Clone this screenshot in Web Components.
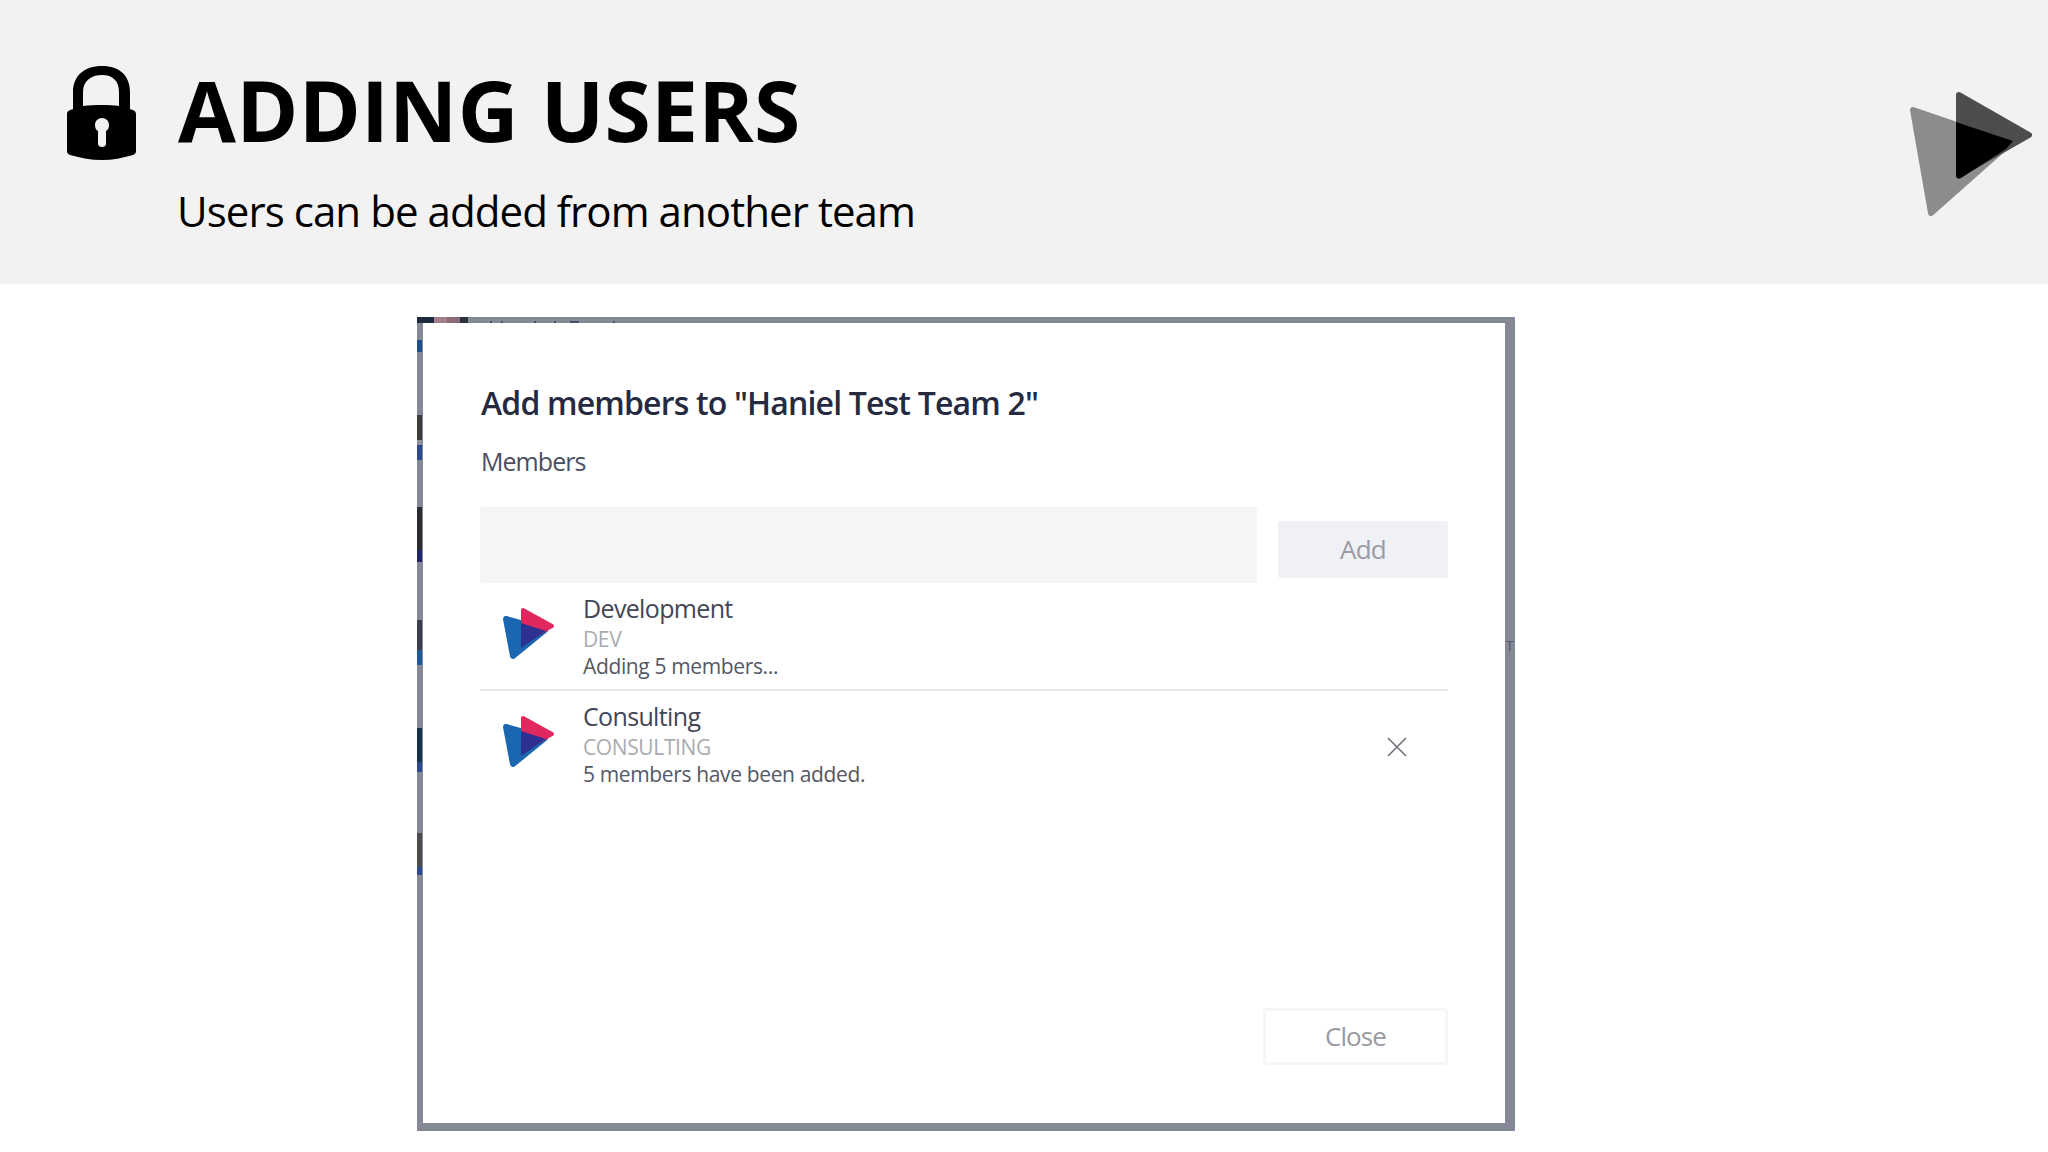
<!DOCTYPE html>
<html><head><meta charset="utf-8"><style>html,body{margin:0;background:#fff;font-family:"Open Sans","Noto Sans",sans-serif}</style></head><body>
<slide-header heading="ADDING USERS" sub="Users can be added from another team"></slide-header>
<slide-stage>
<add-dialog heading='Add members to "Haniel Test Team 2"' label="Members">
<team-row name="Development" code="DEV" status="Adding 5 members..."></team-row>
<team-row name="Consulting" code="CONSULTING" status="5 members have been added." removable></team-row>
</add-dialog>
</slide-stage>
<script>
function def(name,html,init){customElements.define(name,class extends HTMLElement{connectedCallback(){if(this.shadowRoot)return;const s=this.attachShadow({mode:'open'});s.innerHTML=html;init&&init(this,s)}})}
const attrs=(h,s)=>{s.querySelectorAll('[data-a]').forEach(e=>e.textContent=h.getAttribute(e.dataset.a)||'')};
def('slide-header',`<style>
:host{display:flex;box-sizing:border-box;height:284px;background:#f2f2f2;position:relative;padding:66px 0 0 67px;gap:41px;color:#000}
.lock{width:70px;height:94px;flex:none;display:block}
.t{display:flex;flex-direction:column;padding-top:2px}
h1{margin:0;font:700 84px/1 "Open Sans",sans-serif;letter-spacing:.25px;height:78px;white-space:nowrap}
p{margin:40px 0 0 -1px;font:400 42px/1.2 "Open Sans",sans-serif;letter-spacing:-.93px;white-space:nowrap}
.logo{position:absolute;left:1905px;top:88px;width:132px;height:132px}
</style>
<svg class="lock" viewBox="0 0 70 94"><path fill-rule="evenodd" fill="#000" d="M6 43V26C6 10 17 0 35 0S63 10 63 26V43C66 44 69 45 69 48V85C69 87 68 88 66 89C55 92 46 94 35 94S14 92 3 89C1 88 0 87 0 85V48C0 45 3 44 6 43ZM16 40C22 39 29 39 35 39S47 39 52 40V26C52 15 46 9 35 9S16 15 16 26ZM35 52C31 52 28 55 28 59C28 62 29 64 31 65V78C31 80 33 81 35 81S39 80 39 78V65C41 64 42 62 42 59C42 55 39 52 35 52Z"/></svg>
<div class="t"><h1 data-a="heading"></h1><p data-a="sub"></p></div>
<svg class="logo" viewBox="1905 88 132 132"><path d="M1913 110L1931 213L2010 143Z" fill="#8c8c8c" stroke="#8c8c8c" stroke-width="6" stroke-linejoin="round"/><path d="M1959 95L2029 135L1959 175Z" fill="#4d4d4d" stroke="#4d4d4d" stroke-width="6" stroke-linejoin="round"/><path d="M1956 122L2013 141L2006 149L1961 178Q1956 180 1956 175Z" fill="#000"/></svg>`,attrs);
def('slide-stage',`<style>:host{display:block;padding:33px 0 0 417px}</style><slot></slot>`);
def('add-dialog',`<style>
:host{display:block;box-sizing:border-box;width:1098px;height:814px;padding:6px 10px 8px 6px;position:relative;color:#252a41;
background:
 linear-gradient(90deg,#1c2c3d 0 17px,#a07f8a 17px 30px,#8a6a78 30px 43px,#2c3140 43px 51px,transparent 51px) 0 0/51px 6px no-repeat,
 linear-gradient(90deg,transparent 0 73px,#4a4e60 73px 75px,transparent 75px 84px,#4a4e60 84px 86px,transparent 86px 117px,#4a4e60 117px 119px,transparent 119px 137px,#4a4e60 137px 139px,transparent 139px 153px,#4a4e60 153px 162px,transparent 162px 196px,#4a4e60 196px 198px,transparent 198px) 0 4px/210px 2px no-repeat,
 linear-gradient(transparent 0 23px,#1f4f8a 23px 35px,transparent 35px 98px,#3c3c3c 98px 123px,#8f8f9a 123px 128px,#2a4a8c 128px 143px,transparent 143px 190px,#2b2b30 190px 233px,#20246a 233px 245px,transparent 245px 303px,#3b3f4b 303px 333px,#1f5a9c 333px 348px,transparent 348px 411px,#16324d 411px 445px,#2b4a90 445px 455px,transparent 455px 516px,#4c4c4c 516px 550px,#2b4a90 550px 558px,transparent 558px) 0 0/5px 100% no-repeat,
 #848897}
.edge{position:absolute;left:1088px;top:321px;font:400 15px/15px "Open Sans",sans-serif;color:#555a6a;width:10px;text-align:center}
.in{background:#fff;height:100%;box-sizing:border-box;padding:64px 57px 0 57px;display:flex;flex-direction:column}
h2{margin:0;padding-left:1px;font:600 32px/32px "Open Sans",sans-serif;letter-spacing:-.83px;white-space:nowrap;height:32px}
.lab{margin-top:27px;padding-left:1px;font:400 25px/30px "Open Sans",sans-serif;letter-spacing:-.95px;color:#4a4e60;height:30px}
.add{display:flex;gap:21px;align-items:center;margin-top:31px}
.inp{flex:none;width:777px;height:76px;background:#f4f5f7;border-radius:2px}
.btn{width:170px;height:57px;box-sizing:border-box;border-radius:3px;display:flex;align-items:center;justify-content:center;font:400 26px/1 "Open Sans",sans-serif;letter-spacing:-.7px;color:#9a9ba5;background:#f0f1f4}
.add .btn{margin-top:9px;padding-bottom:1px}
.list{display:flex;flex-direction:column;flex:1}
.foot{display:flex;justify-content:flex-end;padding:0 0 58px}
.close{width:185px;background:#fff;border:3px solid #f6f6f8;color:#9a9aa0;padding-bottom:2px;letter-spacing:-.9px}
::slotted(team-row:first-child){border-bottom:2px solid #e6e7ec}
</style>
<div class="edge">T</div>
<div class="in"><h2 data-a="heading"></h2><div class="lab" data-a="label"></div>
<div class="add"><div class="inp"></div><div class="btn">Add</div></div>
<div class="list"><slot></slot></div>
<div class="foot"><div class="btn close">Close</div></div></div>`,attrs);
def('team-row',`<style>
:host{display:flex;box-sizing:border-box;height:108px;align-items:flex-start;position:relative;color:#4a4e60}
.lg{width:56px;height:56px;flex:none;margin:22px 0 0 20px}
.c{margin-left:27px;padding-top:9px;display:flex;flex-direction:column}
.n{font:400 25px/33px "Open Sans",sans-serif;letter-spacing:-.65px;color:#434656;white-space:nowrap}
.k{font:400 21px/28px "Open Sans",sans-serif;letter-spacing:-.38px;color:#aaabb0;white-space:nowrap}
.s{font:400 21px/27px "Open Sans",sans-serif;letter-spacing:-.36px;color:#555865;white-space:nowrap}
.x{position:absolute;left:907px;top:46px;width:20px;height:20px;display:none}
:host([removable]) .x{display:block}
</style>
<svg class="lg" viewBox="500 605 56 56"><path d="M506 619L513 656L545 630Z" fill="#1b66b0" stroke="#1b66b0" stroke-width="6" stroke-linejoin="round"/><path d="M523 610L552 626L523 642Z" fill="#e0285f" stroke="#e0285f" stroke-width="4" stroke-linejoin="round"/><path d="M521 623L546 631L521 648Z" fill="#2e3192"/></svg>
<div class="c"><div class="n" data-a="name"></div><div class="k" data-a="code"></div><div class="s" data-a="status"></div></div>
<svg class="x" viewBox="0 0 20 20"><path d="M1 1L19 19M19 1L1 19" stroke="#6f7079" stroke-width="1.6" fill="none"/></svg>`,attrs);
</script></body></html>
